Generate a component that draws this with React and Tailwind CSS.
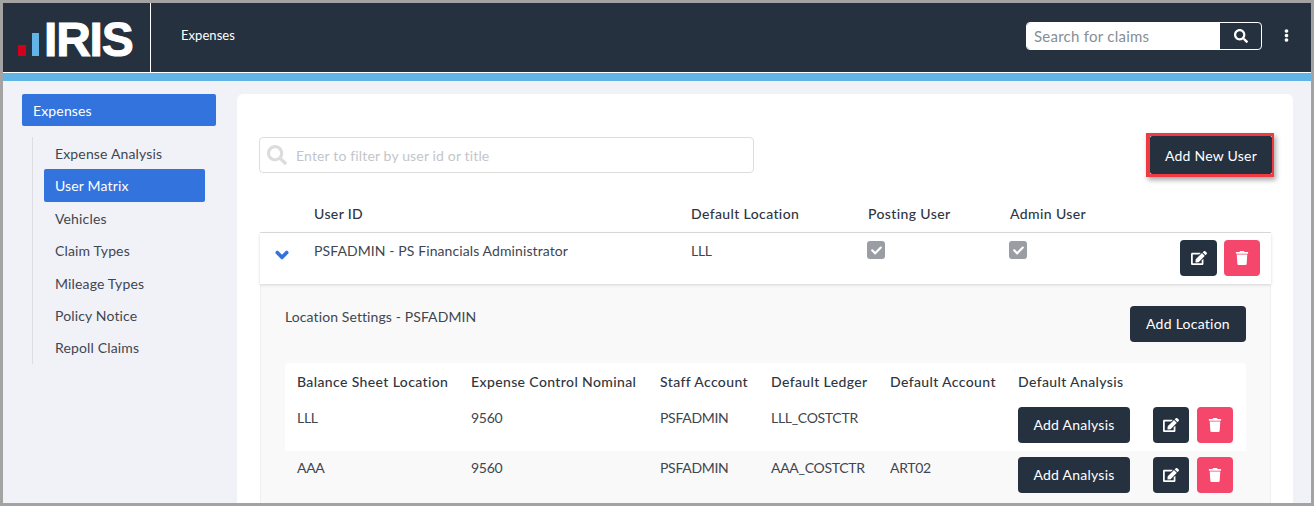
import React from "react";
import { FaSearch, FaEllipsisV, FaChevronDown, FaEdit, FaTrash, FaCheck } from "react-icons/fa";

const navItems = ["Expense Analysis", "User Matrix", "Vehicles", "Claim Types", "Mileage Types", "Policy Notice", "Repoll Claims"];

const locations = [
  { name: "LLL", nominal: "9560", staff: "PSFADMIN", ledger: "LLL_COSTCTR", account: "", striped: false },
  { name: "AAA", nominal: "9560", staff: "PSFADMIN", ledger: "AAA_COSTCTR", account: "ART02", striped: true },
];

export default function App() {
  return (
    <div className="h-[506px] overflow-hidden border-[3px] border-[#a3a3a3] bg-[#f1f2f8] text-[14px] tracking-[0.15px] text-[#3f4650] font-['Lato',sans-serif]">
      {/* Top bar */}
      <header className="flex h-[69px] items-stretch bg-[#25313f] text-white">
        <div className="flex w-[147px] items-end pb-[16px] pl-[15px]">
          <div className="flex h-[35px] items-end gap-[6px]">
            <span className="h-[11px] w-[8px] bg-[#d0021b]" />
            <span className="h-[23px] w-[7px] bg-[#62b3e6]" />
          </div>
          <span className="ml-[5px] -mb-[2px] h-[37px] text-[48px] leading-[37px] font-bold tracking-[-1.2px] [-webkit-text-stroke:1px_white] font-['Liberation_Sans',sans-serif]">IRIS</span>
        </div>
        <div className="w-px bg-white" />
        <div className="pl-[30px] pt-[22px] text-[13px] leading-[20px] tracking-[0.05px]">Expenses</div>
        <div className="ml-auto flex items-center pb-[4px] pr-[18px]">
          <div className="flex h-[28px] w-[236px] overflow-hidden rounded-[4px] border border-white">
            <div className="flex-1 bg-white pl-[7px] text-[15px] leading-[26px] tracking-[0.25px] text-[#868e96]">Search for claims</div>
            <div className="flex w-[41px] items-center justify-center">
              <FaSearch className="h-[14px] w-[14px]" />
            </div>
          </div>
          <FaEllipsisV className="ml-[18px] h-[13px] w-[13px]" />
        </div>
      </header>
      <div className="h-[9px] border-t border-white bg-[#62b3e6]" />

      <div className="flex gap-[21px] pl-[19px] pt-[13px]">
        {/* Sidebar */}
        <aside className="w-[194px] shrink-0">
          <div className="h-[32px] rounded-[2px] bg-[#3373dd] pl-[11px] leading-[34px] text-white">Expenses</div>
          <nav className="ml-[10px] mt-[11px] border-l border-[#dcdde2] pl-[11px] pr-[11px]">
            {navItems.map((item) => (
              <div
                key={item}
                className={`h-[32.4px] rounded-[2px] pl-[11px] leading-[33px] ${item === "User Matrix" ? "bg-[#3373dd] text-white" : ""}`}
              >
                {item}
              </div>
            ))}
          </nav>
        </aside>

        {/* Main card */}
        <main className="h-[500px] w-[1056px] shrink-0 overflow-hidden rounded-[6px] bg-white pl-[22px] pr-[22px] pt-[43px]">
          <div className="flex items-start justify-between">
            <div className="flex h-[36px] w-[495px] items-center rounded-[4px] border border-[#dddddd] pl-[7px]">
              <FaSearch className="h-[20px] w-[20px] text-[#dcdcdc]" />
              <span className="ml-[9px] text-[#c2c6ca]">Enter to filter by user id or title</span>
            </div>
            <div className="-mr-[3px] -mt-[4px] border-y-[3px] border-l-[4px] border-r-[2px] border-[#f03a42] shadow-[2px_3px_5px_rgba(0,0,0,0.35)]">
              <button className="h-[38px] w-[122px] rounded-[2px] bg-[#25313f] tracking-[0.25px] text-white">Add New User</button>
            </div>
          </div>

          <div className="ml-[1px] mt-[26px] w-[1011px]">
            {/* User table */}
            <div className="flex h-[30px] items-center border-b border-[#dcdcdc] pb-[8px] font-medium tracking-[0.38px] text-[#2f3640]">
              <div className="w-[54px]" />
              <div className="w-[377px]">User ID</div>
              <div className="w-[177px]">Default Location</div>
              <div className="w-[142px]">Posting User</div>
              <div>Admin User</div>
            </div>
            <div className="relative z-10 flex h-[51px] shadow-[0_1px_3px_rgba(0,0,0,0.15)]">
              <div className="w-[54px] pl-[15px] pt-[15px]">
                <FaChevronDown className="h-[14px] w-[14px] stroke-[50px] text-[#3373dd]" />
              </div>
              <div className="w-[377px] pt-[7px] tracking-[0.1px]">PSFADMIN - PS Financials Administrator</div>
              <div className="w-[177px] pt-[7px] tracking-[-0.3px]">LLL</div>
              <div className="w-[142px] pt-[8px]"><Tick /></div>
              <div className="pt-[8px]"><Tick /></div>
              <div className="ml-auto flex gap-[7px] pr-[11px] pt-[7px]">
                <IconButton dark wide />
                <IconButton />
              </div>
            </div>

            {/* Expanded panel */}
            <div className="h-[230px] border-x border-[#efefef] bg-[#f9f9f9] pl-[24px] pr-[24px] pt-[22px]">
              <div className="flex justify-between">
                <div className="tracking-[0.1px]">Location Settings - PSFADMIN</div>
                <button className="h-[36px] w-[116px] rounded-[4px] bg-[#25313f] pb-[2px] tracking-[0.25px] text-white">Add Location</button>
              </div>
              <div className="mt-[21px] rounded-[4px] bg-white">
                <div className="flex h-[38px] items-center pb-[2px] pl-[12px] font-medium tracking-[0.38px] text-[#2f3640]">
                  <div className="w-[174px]">Balance Sheet Location</div>
                  <div className="w-[189px]">Expense Control Nominal</div>
                  <div className="w-[111px]">Staff Account</div>
                  <div className="w-[119px]">Default Ledger</div>
                  <div className="w-[128px]">Default Account</div>
                  <div>Default Analysis</div>
                </div>
                {locations.map((row) => (
                  <div key={row.name} className={`flex h-[50px] pl-[12px] pt-[6px] ${row.striped ? "bg-[#f9f9f9]" : ""}`}>
                    <div className="w-[174px] leading-[22px] tracking-[-0.3px]">{row.name}</div>
                    <div className="w-[189px] leading-[22px] tracking-[-0.3px]">{row.nominal}</div>
                    <div className="w-[111px] leading-[22px] tracking-[-0.3px]">{row.staff}</div>
                    <div className="w-[119px] leading-[22px] tracking-[-0.3px]">{row.ledger}</div>
                    <div className="w-[128px] leading-[22px] tracking-[-0.3px]">{row.account}</div>
                    <button className="h-[36px] w-[112px] rounded-[4px] bg-[#25313f] pb-[2px] tracking-[0.25px] text-white">Add Analysis</button>
                    <div className="ml-[23px] flex gap-[8px]">
                      <IconButton dark />
                      <IconButton />
                    </div>
                  </div>
                ))}
              </div>
            </div>
          </div>
        </main>
      </div>
    </div>
  );
}

function Tick() {
  return (
    <span className="-ml-px flex h-[18px] w-[18px] items-center justify-center rounded-[3px] bg-[#9a9da3]">
      <FaCheck className="h-[11px] w-[11px] text-white" />
    </span>
  );
}

function IconButton({ dark, wide }) {
  return (
    <button className={`flex h-[36px] ${wide ? "w-[37px]" : "w-[36px]"} items-center justify-center rounded-[4px] text-white ${dark ? "bg-[#25313f]" : "bg-[#f4476b]"}`}>
      {dark ? <FaEdit className="h-[16px] w-[16px]" /> : <FaTrash className="h-[14px] w-[14px]" />}
    </button>
  );
}
